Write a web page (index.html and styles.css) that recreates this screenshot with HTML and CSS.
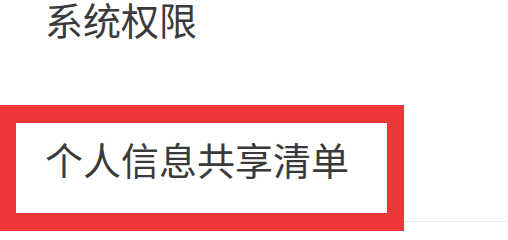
FILE: index.html
```html
<!DOCTYPE html>
<html lang="zh-CN">
<head>
<meta charset="utf-8">
<link rel="stylesheet" href="styles.css">
</head>
<body>
<div class="list">
  <div class="item item-first"><span class="label">系统权限</span></div>
  <div class="item item-second"><span class="label">个人信息共享清单</span></div>
  <div class="highlight"></div>
</div>
</body>
</html>
```
FILE: styles.css
```css
html, body {
  margin: 0;
  padding: 0;
  background: #ffffff;
}
body {
  width: 508px;
  height: 238px;
  overflow: hidden;
  font-family: "Noto Sans CJK SC", "Noto Sans", sans-serif;
}
.list {
  position: relative;
  display: flex;
  flex-direction: column;
}
.item {
  padding-left: 45px;
  color: #3a3a3a;
  font-size: 38px;
  line-height: 38px;
}
.item-first {
  height: 105px;
  box-sizing: border-box;
}
.item-second {
  padding-top: 35px;
  height: 117px;
  box-sizing: border-box;
  border-bottom: 1px solid #ececec;
}
.highlight {
  position: absolute;
  left: 0;
  top: 105px;
  width: 404px;
  height: 126px;
  box-sizing: border-box;
  border-style: solid;
  border-color: #ee3538;
  border-width: 18px 17px 18px 16px;
}
```
